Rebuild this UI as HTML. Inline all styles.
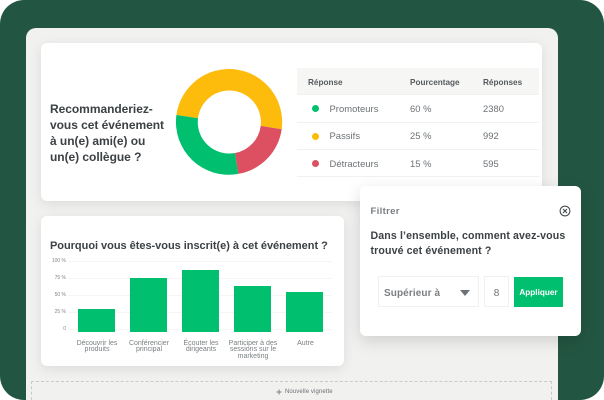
<!DOCTYPE html>
<html lang="fr">
<head>
<meta charset="utf-8">
<style>
html,body{margin:0;padding:0;background:#fff;overflow:hidden;}
#root{position:relative;width:604px;height:400px;overflow:hidden;background:#fff;font-family:"Liberation Sans",sans-serif;filter:blur(.3px);}
#bg{position:absolute;left:0;top:0;width:604px;height:400px;background:#235642;border-radius:24px;}
#panel{position:absolute;left:26px;top:28px;width:532px;height:372px;background:#f1f1f0;border-radius:10px 10px 0 0;}
.card{position:absolute;background:#fff;border-radius:6px;box-shadow:0 3px 12px rgba(0,0,0,.09);}
.t{position:absolute;white-space:nowrap;}
.q{font-weight:700;color:#3b4144;}
.th{font-size:8.2px;font-weight:700;color:#555b5e;line-height:12px;}
.td{font-size:9.4px;color:#6b7174;line-height:12px;letter-spacing:.05px;}
.dot{position:absolute;width:7px;height:7px;border-radius:50%;}
.line{position:absolute;left:297px;width:242px;height:1px;background:#f1f1f0;}
.grid{position:absolute;left:68px;width:264px;height:1px;background:#f5f5f4;}
.yl{position:absolute;width:26px;left:40px;text-align:right;font-size:5px;line-height:7px;color:#808588;}
.bar{position:absolute;width:37px;background:#00bf6f;}
.xl{position:absolute;width:56px;text-align:center;font-size:7px;line-height:6.8px;color:#7a8083;top:340.5px;}
.box{position:absolute;background:#fff;border:1px solid #f0f0ef;box-sizing:border-box;}
</style>
</head>
<body>
<div id="root">
  <div id="bg"></div>
  <div id="panel"></div>

  <div class="card" style="left:41px;top:43px;width:501px;height:158px;"></div>
  <div class="t q" style="left:50px;top:101px;font-size:12px;line-height:16px;letter-spacing:-.04px;">Recommanderiez-<br>vous cet événement<br>à un(e) ami(e) ou<br>un(e) collègue ?</div>

  <svg style="position:absolute;left:0;top:0;" width="604" height="400" viewBox="0 0 604 400">
    <path d="M176.4 115 A52.8 52.8 0 0 1 281.7 129.3 L260.7 125.9 A31.4 31.4 0 0 0 198 118.3 Z" fill="#fdbb0b"/>
    <path d="M281.7 129.3 A52.8 52.8 0 0 1 238.3 173.9 L235 153 A31.4 31.4 0 0 0 260.7 125.9 Z" fill="#dc5061"/>
    <path d="M238.3 173.9 A52.8 52.8 0 0 1 176.4 115 L198 118.3 A31.4 31.4 0 0 0 235 153 Z" fill="#00bf6f"/>
  </svg>

  <div style="position:absolute;left:297px;top:68px;width:242px;height:26px;background:#f6f6f5;"></div>
  <div class="line" style="top:94px;"></div>
  <div class="line" style="top:122px;"></div>
  <div class="line" style="top:149px;"></div>
  <div class="line" style="top:176px;"></div>
  <div class="t th" style="left:308px;top:77px;">Réponse</div>
  <div class="t th" style="left:410px;top:77px;">Pourcentage</div>
  <div class="t th" style="left:483px;top:77px;">Réponses</div>

  <div class="dot" style="left:312px;top:105px;background:#00bf6f;"></div>
  <div class="t td" style="left:329.500px;top:103px;">Promoteurs</div>
  <div class="t td" style="left:410px;top:103px;">60 %</div>
  <div class="t td" style="left:483px;top:103px;">2380</div>

  <div class="dot" style="left:312px;top:132.500px;background:#fdbb0b;"></div>
  <div class="t td" style="left:329.500px;top:130px;">Passifs</div>
  <div class="t td" style="left:410px;top:130px;">25 %</div>
  <div class="t td" style="left:483px;top:130px;">992</div>

  <div class="dot" style="left:312px;top:159.500px;background:#dc5061;"></div>
  <div class="t td" style="left:329.500px;top:158px;">Détracteurs</div>
  <div class="t td" style="left:410px;top:158px;">15 %</div>
  <div class="t td" style="left:483px;top:158px;">595</div>

  <div class="card" style="left:41px;top:216px;width:303px;height:150px;"></div>
  <div class="t q" style="left:50px;top:239px;font-size:11px;line-height:14px;letter-spacing:-.03px;">Pourquoi vous êtes-vous inscrit(e) à cet événement ?</div>

  <div class="grid" style="top:261px;"></div>
  <div class="grid" style="top:278px;"></div>
  <div class="grid" style="top:295px;"></div>
  <div class="grid" style="top:312px;"></div>
  <div class="grid" style="top:329px;"></div>
  <div class="yl" style="top:258px;">100 %</div>
  <div class="yl" style="top:275px;">75 %</div>
  <div class="yl" style="top:292px;">50 %</div>
  <div class="yl" style="top:309px;">25 %</div>
  <div class="yl" style="top:326px;">0</div>

  <div class="bar" style="left:77.5px;top:309px;height:23px;"></div>
  <div class="bar" style="left:129.5px;top:278px;height:54px;"></div>
  <div class="bar" style="left:181.5px;top:270px;height:62px;"></div>
  <div class="bar" style="left:233.5px;top:285.5px;height:46.5px;"></div>
  <div class="bar" style="left:285.5px;top:292px;height:40px;"></div>

  <div class="xl" style="left:69px;">Découvrir les produits</div>
  <div class="xl" style="left:121px;">Conférencier principal</div>
  <div class="xl" style="left:173px;">Écouter les dirigeants</div>
  <div class="xl" style="left:225px;">Participer à des sessions sur le marketing</div>
  <div class="xl" style="left:277.500px;">Autre</div>

  <div style="position:absolute;left:31px;top:381px;width:521px;height:19px;border:1px dashed #c9cbca;border-bottom:0;box-sizing:border-box;"></div>
  <svg style="position:absolute;left:276px;top:389px;" width="6" height="6" viewBox="0 0 6 6"><path d="M3 .5V5.5M.5 3H5.5" stroke="#7a8083" stroke-width="1" fill="none"/></svg>
  <div class="t" style="left:285px;top:388px;font-size:6px;line-height:8px;color:#6b7174;letter-spacing:.1px;">Nouvelle vignette</div>

  <div class="card" style="left:360px;top:186px;width:221px;height:150px;box-shadow:0 5px 16px rgba(0,0,0,.14);"></div>
  <div class="t" style="left:370.500px;top:206px;font-size:9.6px;line-height:12px;font-weight:700;color:#7a7f82;letter-spacing:.3px;">Filtrer</div>
  <svg style="position:absolute;left:559px;top:205px;" width="12" height="12" viewBox="0 0 12 12"><circle cx="6" cy="6" r="4.9" fill="none" stroke="#3b4144" stroke-width="1"/><path d="M4 4L8 8M8 4L4 8" stroke="#3b4144" stroke-width="1" fill="none"/></svg>
  <div class="t q" style="left:370.500px;top:228.500px;font-size:10.6px;line-height:15px;letter-spacing:.12px;">Dans l’ensemble, comment avez-vous<br>trouvé cet événement ?</div>

  <div class="box" style="left:378px;top:276px;width:101px;height:31px;"></div>
  <div class="t" style="left:384px;top:288px;font-size:10px;line-height:12px;font-weight:700;color:#7a7f82;letter-spacing:.1px;">Supérieur à</div>
  <svg style="position:absolute;left:460px;top:290px;" width="10" height="6" viewBox="0 0 10 6"><path d="M0 0H10L5 6Z" fill="#6b7174"/></svg>
  <div class="box" style="left:484px;top:276px;width:25px;height:31px;"></div>
  <div class="t" style="left:484px;width:25px;text-align:center;top:288px;font-size:10px;line-height:12px;color:#6b7174;">8</div>
  <div style="position:absolute;left:514px;top:277px;width:49px;height:30px;background:#00bf6f;"></div>
  <div class="t" style="left:514px;width:49px;text-align:center;top:287px;font-size:8.2px;line-height:11px;font-weight:700;color:#fff;">Appliquer</div>
</div>
</body>
</html>
